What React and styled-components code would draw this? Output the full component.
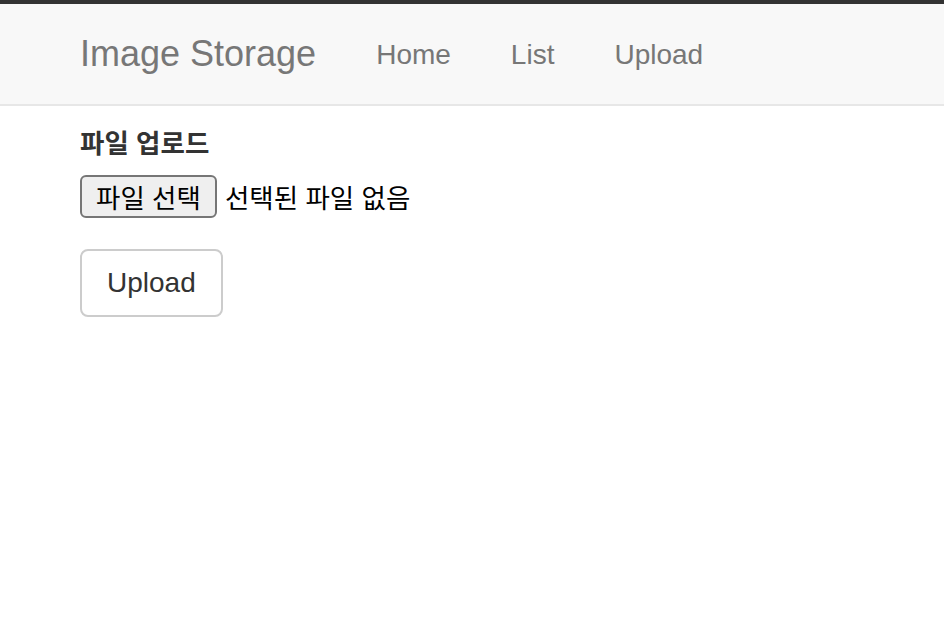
import React, { Component } from 'react';
import styled, { createGlobalStyle } from 'styled-components';

const GlobalStyle = createGlobalStyle`
  html, body {
    margin: 0;
    padding: 0;
    background: #fff;
  }
  body {
    font-family: "Liberation Sans", "Noto Sans CJK KR", Arial, sans-serif;
    color: #333;
  }
`;

const Navbar = styled.nav`
  display: flex;
  align-items: center;
  height: 100px;
  padding: 0 50px;
  background: #f8f8f8;
  border-top: 4px solid #333;
  border-bottom: 2px solid #e7e7e7;
`;

const Brand = styled.a`
  padding: 0 30px;
  font-size: 36px;
  line-height: 40px;
  color: #777;
  text-decoration: none;
`;

const NavList = styled.ul`
  display: flex;
  margin: 0;
  padding: 1px 0 0;
  list-style: none;
`;

const NavLink = styled.a`
  display: block;
  padding: 0 30px;
  font-size: 28px;
  line-height: 40px;
  color: #777;
  text-decoration: none;
`;

const Main = styled.main`
  padding: 18px 80px 0;
`;

const Form = styled.form`
  display: flex;
  flex-direction: column;
  align-items: flex-start;
`;

const Label = styled.label`
  font-size: 26.5px;
  font-weight: bold;
  line-height: 40px;
  color: #333;
  margin-bottom: 10px;
`;

const FileRow = styled.label`
  display: flex;
  align-items: center;
  gap: 8px;
  height: 44px;
  cursor: pointer;
`;

const HiddenInput = styled.input`
  display: none;
`;

const FileButton = styled.span`
  display: flex;
  align-items: center;
  justify-content: center;
  box-sizing: border-box;
  height: 43px;
  padding: 0 14px;
  background: #efefef;
  border: 2px solid #767676;
  border-radius: 6px;
  font-size: 26.5px;
  color: #000;
`;

const FileText = styled.span`
  font-size: 26.5px;
  color: #000;
`;

const Button = styled.button`
  margin-top: 31px;
  box-sizing: border-box;
  height: 68px;
  padding: 0 25px;
  background: #fff;
  border: 2px solid #ccc;
  border-radius: 8px;
  font-family: "Liberation Sans", Arial, sans-serif;
  font-size: 28px;
  color: #333;
  cursor: pointer;
`;

export default class App extends Component {
  state = {
    fileName: ''
  }

  handleChange = event => {
    const file = event.target.files[0]
    this.setState({ fileName: file ? file.name : '' })
  }

  render() {
    return (
      <>
        <GlobalStyle />
        <Navbar>
          <Brand href="#">Image Storage</Brand>
          <NavList>
            <li><NavLink href="#">Home</NavLink></li>
            <li><NavLink href="#">List</NavLink></li>
            <li><NavLink href="#">Upload</NavLink></li>
          </NavList>
        </Navbar>
        <Main>
          <Form onSubmit={ e => e.preventDefault() }>
            <Label>파일 업로드</Label>
            <FileRow>
              <HiddenInput type="file" onChange={ this.handleChange } />
              <FileButton>파일 선택</FileButton>
              <FileText>{ this.state.fileName || '선택된 파일 없음' }</FileText>
            </FileRow>
            <Button type="submit">Upload</Button>
          </Form>
        </Main>
      </>
    )
  }
}
